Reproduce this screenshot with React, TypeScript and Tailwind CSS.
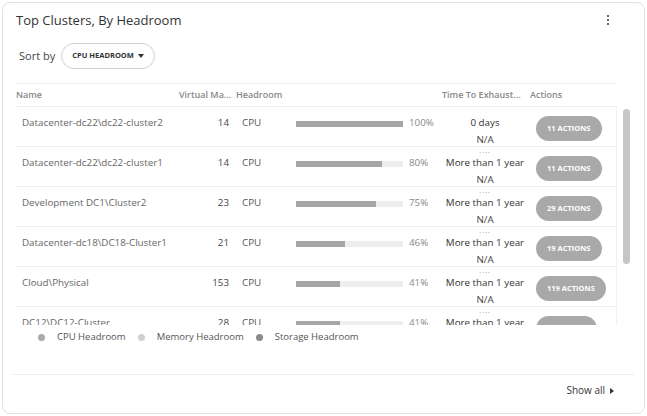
import React from 'react';

type Row = {
  name: string;
  vms: number;
  pct: number;
  time: string;
  actions: number;
};

const rows: Row[] = [
  { name: 'Datacenter-dc22\\dc22-cluster2', vms: 14, pct: 100, time: '0 days', actions: 11 },
  { name: 'Datacenter-dc22\\dc22-cluster1', vms: 14, pct: 80, time: 'More than 1 year', actions: 11 },
  { name: 'Development DC1\\Cluster2', vms: 23, pct: 75, time: 'More than 1 year', actions: 29 },
  { name: 'Datacenter-dc18\\DC18-Cluster1', vms: 21, pct: 46, time: 'More than 1 year', actions: 19 },
  { name: 'Cloud\\Physical', vms: 153, pct: 41, time: 'More than 1 year', actions: 119 },
  { name: 'DC12\\DC12-Cluster', vms: 28, pct: 41, time: 'More than 1 year', actions: 7 },
];

const legend = [
  { label: 'CPU Headroom', color: 'bg-[#a9a9a9]' },
  { label: 'Memory Headroom', color: 'bg-[#cfcfcf]' },
  { label: 'Storage Headroom', color: 'bg-[#8a8a8a]' },
];

const App: React.FC = () => {
  return (
    <div className="h-screen w-full bg-white p-[2px] font-['Open_Sans',sans-serif]">
      <div className="flex h-full flex-col rounded-[8px] border border-[#e2e2e2] bg-white">
        {/* Header */}
        <div className="flex items-center justify-between pl-[13px] pr-[35px] pt-[7px]">
          <h1 className="text-[13px] leading-[20px] text-[#333]">Top Clusters, By Headroom</h1>
          <div className="flex flex-col gap-[1.5px]">
            <span className="h-[2.5px] w-[2.5px] rounded-full bg-[#333]" />
            <span className="h-[2.5px] w-[2.5px] rounded-full bg-[#333]" />
            <span className="h-[2.5px] w-[2.5px] rounded-full bg-[#333]" />
          </div>
        </div>

        {/* Sort by */}
        <div className="mt-[13px] flex items-center pl-[16px]">
          <span className="text-[11px] text-[#444]">Sort by</span>
          <button className="ml-[6px] flex h-[26px] items-center gap-[4px] rounded-full border border-[#cfcfcf] px-[10px] text-[7.5px] font-bold text-[#333]">
            CPU HEADROOM
            <svg width="6" height="4" viewBox="0 0 6 4">
              <path d="M0 0h6L3 4z" fill="#333" />
            </svg>
          </button>
        </div>

        {/* Table */}
        <div className="mt-[14px] flex">
          <div className="ml-[13px] w-[601px] border-t border-[#ececec]">
            <div className="flex h-[23px] items-center border-b border-[#ececec] text-[9px] font-semibold text-[#888]">
              <div className="w-[163px]">Name</div>
              <div className="w-[57px]">Virtual Ma...</div>
              <div className="w-[204px]">Headroom</div>
              <div className="w-[90px] pl-[2px]">Time To Exhaust...</div>
              <div>Actions</div>
            </div>
            <div className="flex">
              <div className="h-[218px] flex-1 overflow-hidden border-r border-[#f0f0f0]">
                {rows.map((r, i) => (
                  <div key={r.name} className="flex h-[40px] items-start border-b border-[#ececec] text-[9.8px]">
                    <div className="mt-[9px] w-[163px] truncate pl-[6px] leading-[14px] text-[#666]">{r.name}</div>
                    <div className="mt-[9px] w-[57px] pr-[7px] text-right leading-[14px] text-[#444]">{r.vms}</div>
                    <div className="mt-[9px] w-[60px] pl-[6px] leading-[14px] text-[#555]">CPU</div>
                    <div className="mt-[14px] h-[6px] w-[107px] bg-[#eeeeee]">
                      <div className="h-full bg-[#a6a6a6]" style={{ width: `${r.pct}%` }} />
                    </div>
                    <div className="mt-[9px] w-[37px] pl-[6px] leading-[14px] text-[#888]">{r.pct}%</div>
                    <div className="flex w-[90px] flex-col items-center pt-[2px] text-[#333]">
                      <div className={`h-[7px] text-[7px] leading-[7px] tracking-[1px] text-[#777] ${i === 0 ? 'invisible' : ''}`}>····</div>
                      <div className="leading-[14px]">{r.time}</div>
                      <div className="leading-[20px] text-[#444]">N/A</div>
                    </div>
                    <div className="mt-[9px] pl-[6px]">
                      <div className="flex h-[25px] items-center rounded-full bg-[#a9a9a9] px-[11px] text-[7.5px] font-bold text-white">
                        {r.actions} ACTIONS
                      </div>
                    </div>
                  </div>
                ))}
              </div>
            </div>
          </div>
          {/* Scrollbar */}
          <div className="ml-[6px] mt-[26px] h-[155px] w-[7px] rounded-full bg-[#c6c6c6]" />
        </div>

        {/* Legend */}
        <div className="flex h-[24px] items-center pl-[35px] text-[9.5px] text-[#555]">
          {legend.map((l) => (
            <div key={l.label} className="mr-[12px] flex items-center">
              <span className={`mr-[12px] h-[7px] w-[7px] rounded-full ${l.color}`} />
              {l.label}
            </div>
          ))}
        </div>

        {/* Footer */}
        <div className="mx-[10px] mt-[25px] flex h-[32px] items-center justify-end border-t border-[#ececec] pr-[20px]">
          <span className="text-[10px] text-[#333]">Show all</span>
          <svg className="ml-[5px]" width="4" height="6" viewBox="0 0 4 6">
            <path d="M0 0l4 3-4 3z" fill="#333" />
          </svg>
        </div>
      </div>
    </div>
  );
};

export default App;
